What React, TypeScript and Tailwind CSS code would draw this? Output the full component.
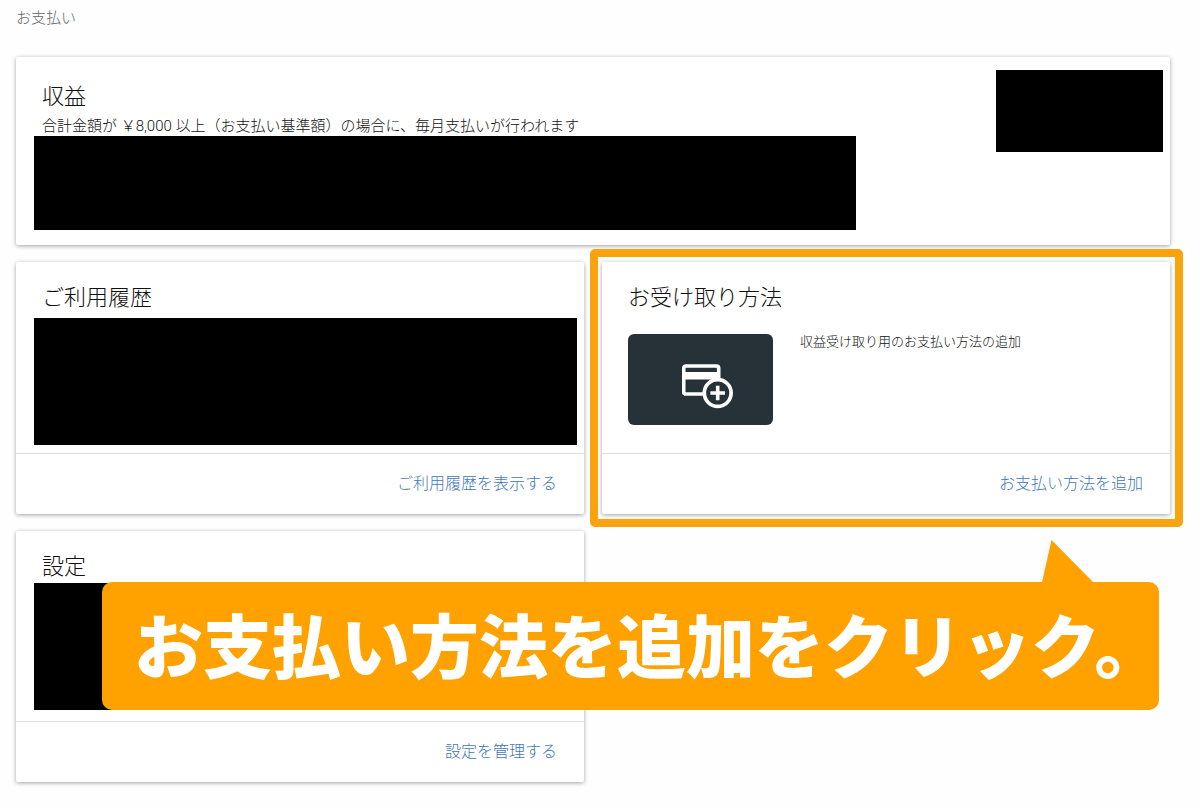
import React from 'react';

interface PaymentCardProps {
  title: string;
  linkLabel: string;
  children: React.ReactNode;
}

const cardStyle = 'rounded-[2px] bg-white shadow-[0_1px_4px_rgba(0,0,0,0.37)]';
const titleStyle = 'text-[22px] leading-8 font-light text-[#111]';

// Card with a title, a body and a link in the footer
const PaymentCard: React.FC<PaymentCardProps> = ({ title, linkLabel, children }) => (
  <section className={`${cardStyle} flex flex-col`}>
    <h2 className={`${titleStyle} px-[26px] pt-5`}>{title}</h2>
    <div className="grow">{children}</div>
    <div className="flex justify-end border-t border-[#e0e0e0] px-[27px] py-[18px]">
      <a href="#" className="text-base leading-6 font-light text-[#3f77b5]">
        {linkLabel}
      </a>
    </div>
  </section>
);

const AddCardIcon: React.FC = () => (
  <svg width="52" height="46" viewBox="0 0 52 46" fill="none" aria-hidden="true">
    <rect x="1.7" y="2" width="35" height="28" rx="2.2" stroke="#fff" strokeWidth="3.6" />
    <path d="M2 8h35v7.6H2z" fill="#fff" />
    <circle cx="35.7" cy="29" r="13.4" fill="#263238" stroke="#fff" strokeWidth="3.7" />
    <path d="M35.7 21.7v14.6M28.4 29h14.6" stroke="#fff" strokeWidth="3.6" />
  </svg>
);

const App: React.FC = () => {
  return (
    <div className="min-h-screen bg-[#fefefe] pt-2 pr-[30px] pb-6 pl-4 font-['Roboto','Noto_Sans_CJK_JP',sans-serif]">
      <h1 className="mb-[29px] text-[15px] leading-5 font-light text-[#666]">お支払い</h1>

      <main className="relative">
        <section className={`${cardStyle} mb-[17px] flex justify-between pr-[7px] pb-[15px] pl-[18px]`}>
          <div className="w-full max-w-[822px] pt-6">
            <h2 className={`${titleStyle} px-2`}>収益</h2>
            <p className="mt-[3px] px-2 text-[15px] leading-5 font-light text-[#111]">
              合計金額が ￥8,000 以上（お支払い基準額）の場合に、毎月支払いが行われます
            </p>
            <div className="h-[94px] bg-black" />
          </div>
          <div className="mt-[13px] h-[82px] w-[167px] shrink-0 bg-black" />
        </section>

        <div className="grid grid-cols-2 gap-x-[18px] gap-y-[17px]">
          <PaymentCard title="ご利用履歴" linkLabel="ご利用履歴を表示する">
            <div className="mt-1 mr-[7px] mb-2 ml-[18px] h-[127px] bg-black" />
          </PaymentCard>

          <div className="relative grid">
            <PaymentCard title="お受け取り方法" linkLabel="お支払い方法を追加">
              <div className="mt-5 mb-7 flex gap-[27px] px-[26px]">
                <div className="h-[91px] w-[145px] shrink-0 rounded-md bg-[#263238] pt-[30px] pl-[54px]">
                  <AddCardIcon />
                </div>
                <p className="text-[13px] leading-4 font-light text-[#111]">
                  収益受け取り用のお支払い方法の追加
                </p>
              </div>
            </PaymentCard>
            {/* orange frame around the card */}
            <div className="pointer-events-none absolute -inset-y-[13px] -right-[13px] -left-3 rounded-[5px] border-8 border-[#fba30c]" />
          </div>

          <PaymentCard title="設定" linkLabel="設定を管理する">
            <div className="mr-[7px] mb-[11px] ml-[18px] h-[127px] bg-black" />
          </PaymentCard>
        </div>

        {/* speech bubble */}
        <div className="absolute right-[11px] bottom-[72px] left-[86px] rounded-[10px] bg-[#ffa200] pt-7 pb-5">
          <svg
            className="absolute right-[66px] bottom-full"
            width="51"
            height="42"
            viewBox="0 0 51 42"
            aria-hidden="true"
          >
            <path d="M9.5 0 51 42H0z" fill="#ffa200" />
          </svg>
          <p className="pl-8 text-[69px] leading-20 font-black whitespace-nowrap text-white">
            お支払い方法を追加をクリック。
          </p>
        </div>
      </main>
    </div>
  );
};

export default App;
